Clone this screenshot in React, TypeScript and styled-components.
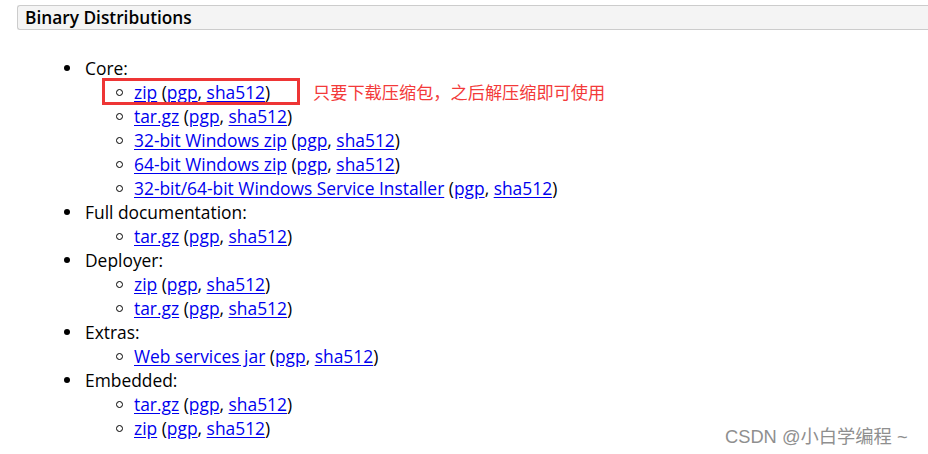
import React from "react";
import styled, { createGlobalStyle } from "styled-components";

const Global = createGlobalStyle`
  html, body { margin: 0; padding: 0; background: #fff; }
  body { font-family: "Open Sans", "Noto Sans", sans-serif; color: #000; }
`;

const Page = styled.div`
  position: relative;
  width: 928px;
  height: 454px;
  overflow: hidden;
  padding-top: 5px;
  box-sizing: border-box;
  display: flex;
  flex-direction: column;
`;

const SectionHeader = styled.h3`
  margin: 0 0 0 17px;
  height: 25px;
  box-sizing: border-box;
  border: 1px solid #cccccc;
  border-right: none;
  border-radius: 3px 0 0 3px;
  background: #f4f4f4;
  padding-left: 7px;
  font-size: 17.3px;
  font-weight: 600;
  line-height: 23px;
  color: #000;
`;

const OuterList = styled.ul`
  list-style: none;
  margin: 26px 0 0 0;
  padding: 0 0 0 85px;
  font-size: 17.4px;
  line-height: 24px;
`;

const OuterItem = styled.li`
  position: relative;
  &::before {
    content: "";
    position: absolute;
    left: -21px;
    top: 9px;
    width: 6px;
    height: 6px;
    border-radius: 50%;
    background: #000;
  }
`;

const InnerList = styled.ul`
  list-style: none;
  margin: 0;
  padding: 0 0 0 49px;
`;

const InnerItem = styled.li`
  position: relative;
  &::before {
    content: "";
    position: absolute;
    left: -18px;
    top: 9px;
    width: 5px;
    height: 5px;
    border-radius: 50%;
    border: 1.5px solid #000;
  }
`;

const Link = styled.a`
  color: #0000ee;
  text-decoration: underline;
  text-underline-offset: 2px;
`;

const Highlight = styled.span`
  position: absolute;
  left: -32px;
  top: -2px;
  width: 198px;
  height: 27px;
  box-sizing: border-box;
  border: 3px solid #ee3535;
  pointer-events: none;
`;

const Note = styled.span`
  position: absolute;
  left: 179px;
  top: 0;
  white-space: nowrap;
  font-family: "Noto Sans CJK SC", sans-serif;
  font-size: 17.2px;
  line-height: 24px;
  color: #f33a3a;
`;

const Watermark = styled.div`
  position: absolute;
  left: 725px;
  top: 426px;
  white-space: nowrap;
  font-family: "Liberation Sans", "Noto Sans CJK SC", sans-serif;
  font-size: 18.3px;
  line-height: 22px;
  color: #8f8f8f;
`;

type Dl = { label: string; note?: boolean };

const Entry: React.FC<Dl> = ({ label, note }) => (
  <InnerItem>
    <Link href="#">{label}</Link> (<Link href="#">pgp</Link>, <Link href="#">sha512</Link>)
    {note && (
      <>
        <Highlight />
        <Note>只要下载压缩包，之后解压缩即可使用</Note>
      </>
    )}
  </InnerItem>
);

const groups: { title: string; items: Dl[] }[] = [
  {
    title: "Core:",
    items: [
      { label: "zip", note: true },
      { label: "tar.gz" },
      { label: "32-bit Windows zip" },
      { label: "64-bit Windows zip" },
      { label: "32-bit/64-bit Windows Service Installer" },
    ],
  },
  { title: "Full documentation:", items: [{ label: "tar.gz" }] },
  { title: "Deployer:", items: [{ label: "zip" }, { label: "tar.gz" }] },
  { title: "Extras:", items: [{ label: "Web services jar" }] },
  { title: "Embedded:", items: [{ label: "tar.gz" }, { label: "zip" }] },
];

export default function App() {
  return (
    <Page>
      <Global />
      <SectionHeader>Binary Distributions</SectionHeader>
      <OuterList>
        {groups.map((g) => (
          <OuterItem key={g.title}>
            {g.title}
            <InnerList>
              {g.items.map((it, i) => (
                <Entry key={i} {...it} />
              ))}
            </InnerList>
          </OuterItem>
        ))}
      </OuterList>
      <Watermark>CSDN @小白学编程 ~</Watermark>
    </Page>
  );
}
